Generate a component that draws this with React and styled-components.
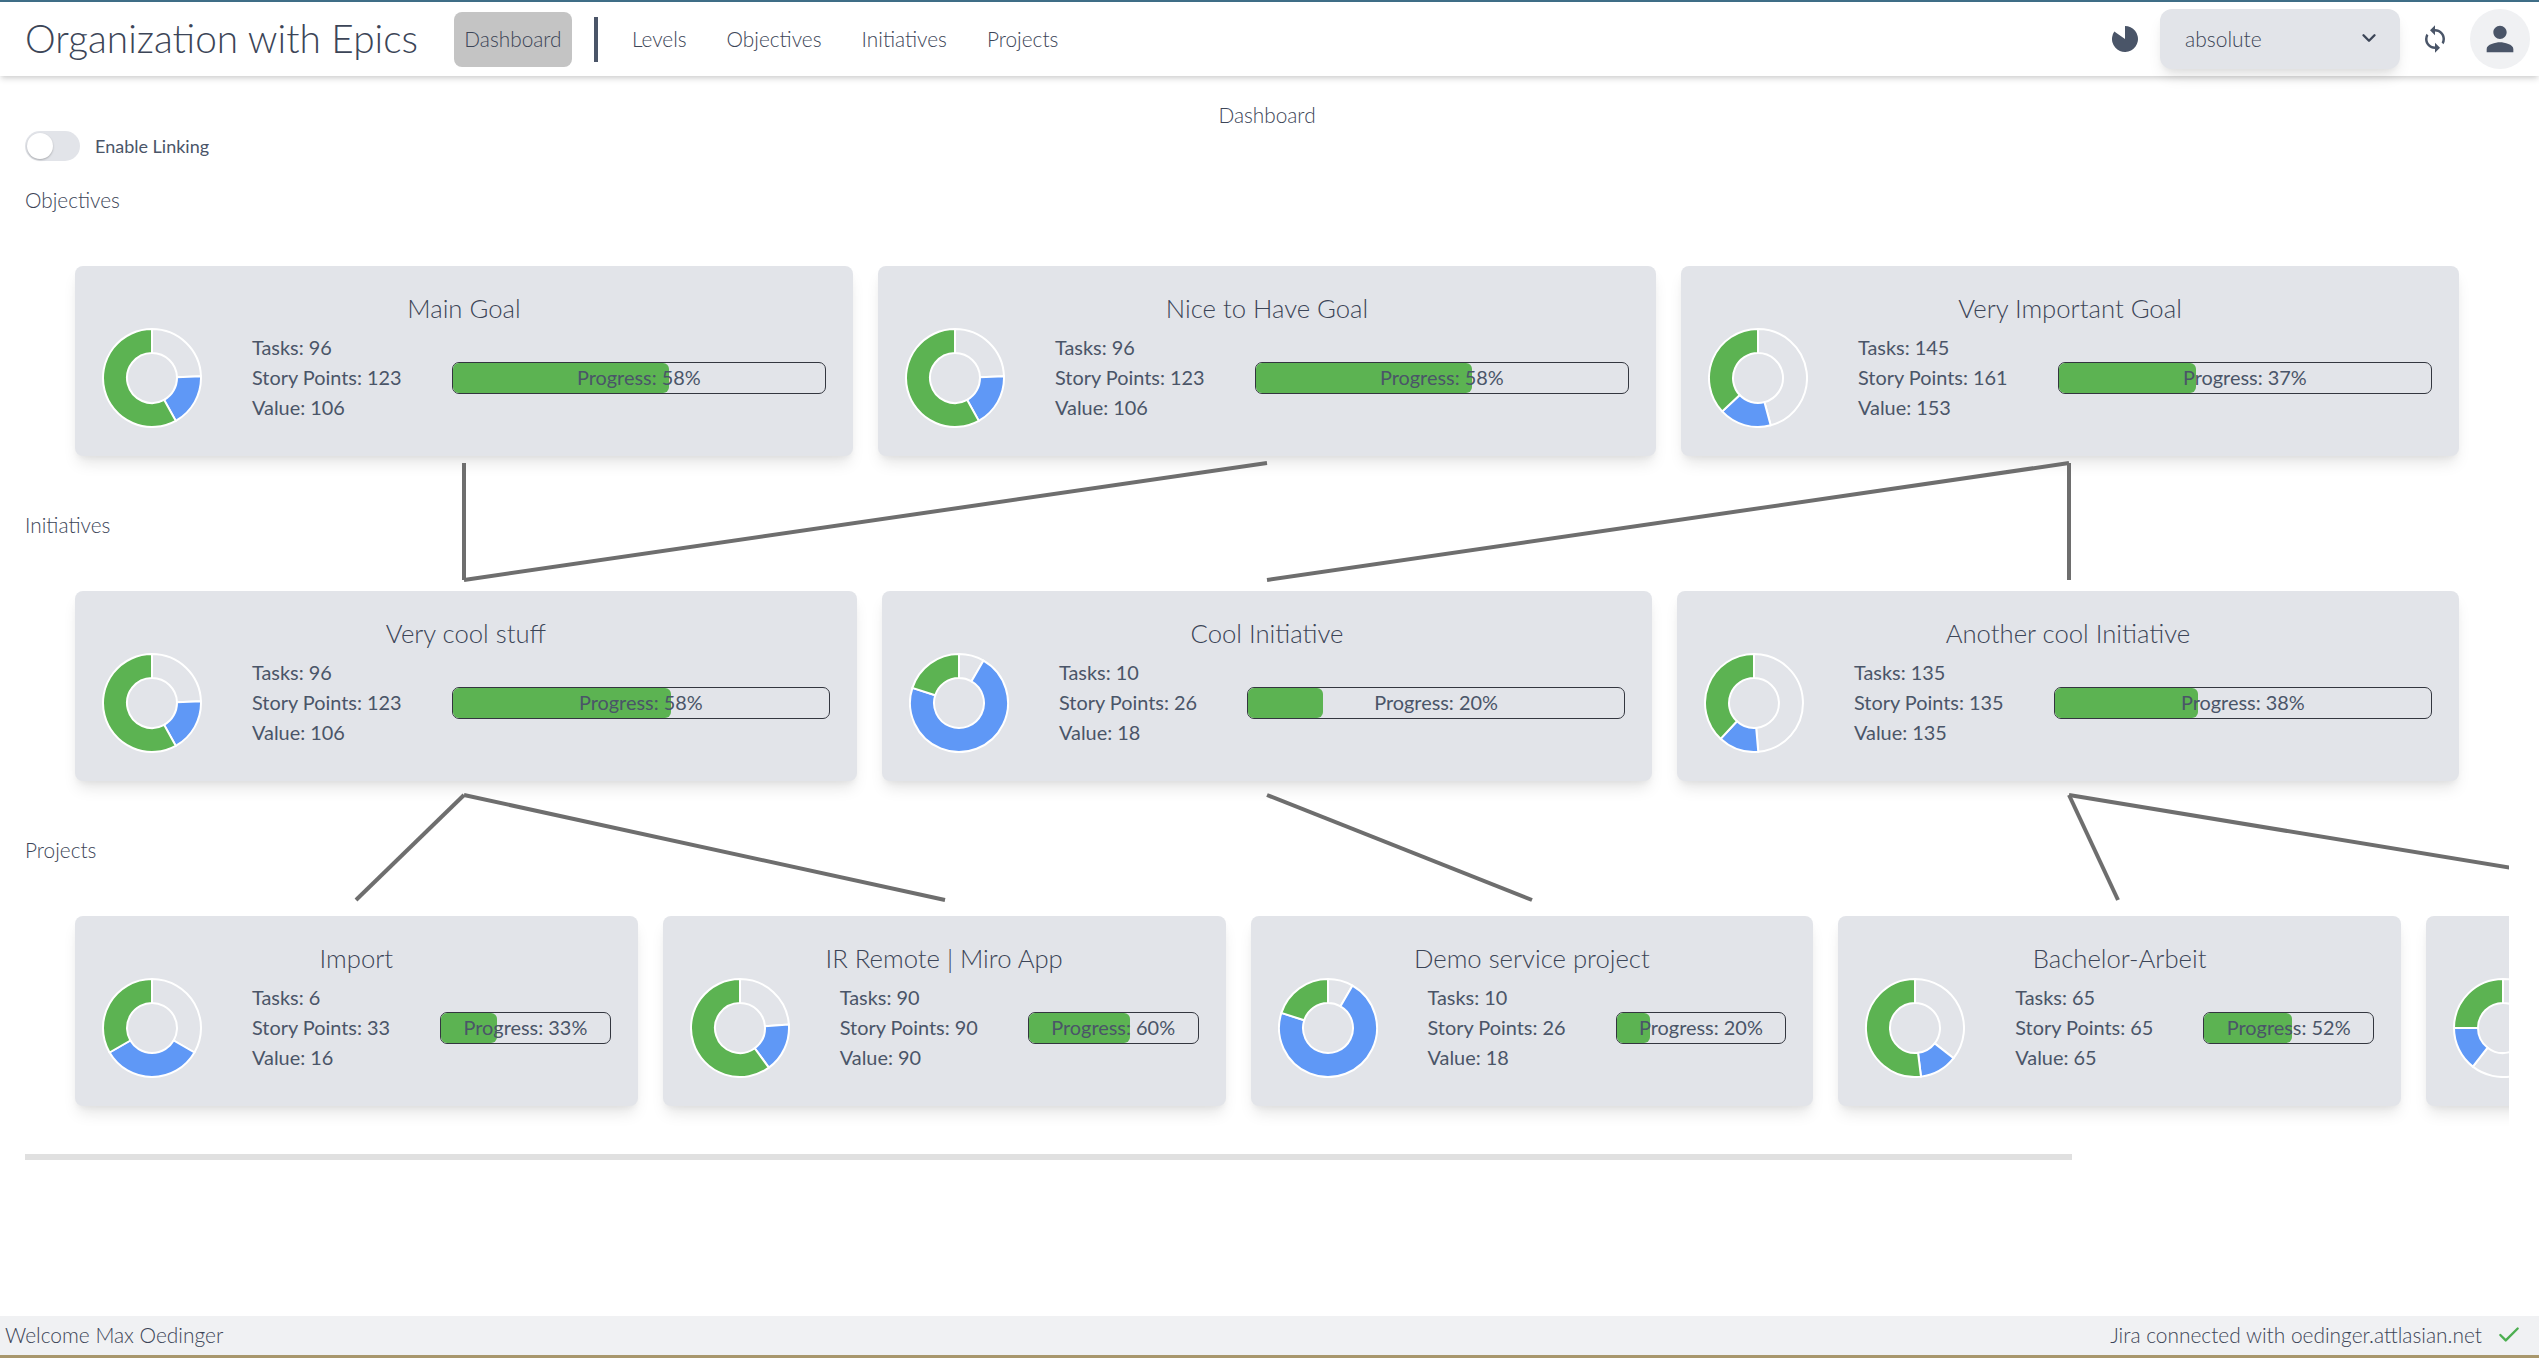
import React from 'react';
import styled, { createGlobalStyle } from 'styled-components';
import { MdSync, MdPerson } from 'react-icons/md';
import { FiChevronDown, FiCheck } from 'react-icons/fi';

const textColor = '#4a5568';
const lightTextColor = '#3c4557';
const cardColor = '#e2e4e9';

const GlobalStyle = createGlobalStyle`
  html, body {
    margin: 0;
    height: 100%;
    overflow: hidden;
    background: #fff;
    color: ${textColor};
    font-family: Lato, "Open Sans", sans-serif;
  }
`;

const Page = styled.div`
  display: flex;
  flex-direction: column;
  height: 100vh;
  border-top: 2px solid #3f6e87;
  border-bottom: 3px solid #a8976c;
  box-sizing: border-box;
`;

const NavBar = styled.header`
  display: flex;
  align-items: center;
  flex-shrink: 0;
  height: 74px;
  padding: 0 9px 0 25px;
  box-sizing: border-box;
  background: #fff;
  box-shadow: 0 4px 6px -1px rgba(0, 0, 0, 0.14), 0 2px 4px -1px rgba(0, 0, 0, 0.06);
  position: relative;
  z-index: 2;
`;

const Brand = styled.h1`
  margin: 0 36px 0 0;
  padding-bottom: 2px;
  color: ${lightTextColor};
  font-size: 38.8px;
  font-weight: 300;
`;

const ActiveLink = styled.div`
  display: flex;
  align-items: center;
  justify-content: center;
  width: 118px;
  height: 55px;
  padding-bottom: 2px;
  box-sizing: border-box;
  border-radius: 8px;
  background: #c4c4c4;
  color: ${lightTextColor};
  font-size: 20.8px;
  font-weight: 300;
`;

const NavDivider = styled.div`
  width: 4px;
  height: 45px;
  margin: 0 34px 0 22px;
  background: ${textColor};
`;

const NavLink = styled.span`
  margin-right: 40px;
  padding-bottom: 2px;
  color: ${lightTextColor};
  font-size: 20.8px;
  font-weight: 300;
`;

const NavRight = styled.div`
  display: flex;
  align-items: center;
  margin-left: auto;
`;

const ModeSelect = styled.div`
  display: flex;
  align-items: center;
  justify-content: space-between;
  width: 240px;
  height: 60px;
  margin: 0 20px 0 22px;
  padding: 0 20px 2px 25px;
  box-sizing: border-box;
  border-radius: 12px;
  background: ${cardColor};
  box-shadow: 0 10px 15px -3px rgba(0, 0, 0, 0.1), 0 4px 6px -2px rgba(0, 0, 0, 0.05);
  color: ${lightTextColor};
  font-size: 21px;
  font-weight: 300;
`;

const Avatar = styled.div`
  display: flex;
  align-items: center;
  justify-content: center;
  width: 60px;
  height: 60px;
  margin-left: 20px;
  border-radius: 50%;
  background: #f0f1f3;
`;

const Main = styled.main`
  flex: 1;
  min-height: 0;
  padding: 0 30px 0 25px;
`;

const PageTitle = styled.div`
  margin-top: 27px;
  height: 24px;
  line-height: 23px;
  text-align: center;
  color: ${lightTextColor};
  font-size: 20.8px;
  font-weight: 300;
`;

const ToggleRow = styled.div`
  display: flex;
  align-items: center;
  gap: 15px;
  height: 30px;
  margin-top: 4px;
  font-size: 18px;
  font-weight: 400;
`;

const ToggleTrack = styled.div`
  display: flex;
  align-items: center;
  width: 55px;
  height: 30px;
  padding: 0 2px;
  box-sizing: border-box;
  border-radius: 15px;
  background: ${cardColor};
`;

const ToggleKnob = styled.div`
  width: 26px;
  height: 26px;
  border-radius: 50%;
  background: #fff;
  box-shadow: 0 1px 2px rgba(0, 0, 0, 0.25);
`;

const Canvas = styled.div`
  position: relative;
  margin-top: 25px;
  overflow: hidden;
`;

const ConnectorLayer = styled.svg`
  position: absolute;
  top: 0;
  left: 0;
  z-index: 1;
  pointer-events: none;
`;

const LevelLabel = styled.div`
  height: 28px;
  line-height: 27px;
  margin-top: ${(props) => (props.$first ? 0 : 55)}px;
  margin-bottom: 52px;
  color: ${lightTextColor};
  font-size: 20.8px;
  font-weight: 300;
`;

const CardRow = styled.div`
  display: grid;
  grid-template-columns: ${(props) => props.$columns};
  gap: 25px;
  padding: 0 50px;
  width: max-content;
`;

const Card = styled.article`
  height: 190px;
  padding: 25px 27px 0;
  box-sizing: border-box;
  border-radius: 8px;
  background: ${cardColor};
  box-shadow: 0 10px 15px -3px rgba(0, 0, 0, 0.1), 0 4px 6px -2px rgba(0, 0, 0, 0.05);
`;

const CardTitle = styled.h3`
  margin: 0;
  height: 36px;
  line-height: 35px;
  text-align: center;
  color: ${lightTextColor};
  font-size: 25.7px;
  font-weight: 300;
`;

const CardBody = styled.div`
  display: flex;
  align-items: center;
  gap: 50px;
  margin-top: 1px;
  white-space: nowrap;
`;

const Stats = styled.div`
  position: relative;
  top: -1px;
  font-size: 19.9px;
  font-weight: 400;
  line-height: 30px;
`;

const ProgressBar = styled.div`
  position: relative;
  flex: 1;
  height: 32px;
  box-sizing: border-box;
  border: 1.5px solid #33363f;
  border-radius: 7px;
  text-align: center;
  line-height: 28px;
  font-size: 19.9px;
`;

const ProgressFill = styled.div`
  position: absolute;
  top: 0;
  bottom: 0;
  left: 0;
  border-radius: 6px;
  background: #5cb352;
`;

const ProgressText = styled.span`
  position: relative;
`;

const ScrollThumb = styled.div`
  width: 2047px;
  height: 6px;
  margin-top: 48px;
  background: #e0e0e0;
`;

const Footer = styled.footer`
  display: flex;
  align-items: center;
  justify-content: space-between;
  flex-shrink: 0;
  height: 39px;
  padding: 0 17px 2px 5px;
  box-sizing: border-box;
  background: #f0f1f3;
  color: ${lightTextColor};
  font-size: 20.9px;
  font-weight: 300;
`;

const FooterStatus = styled.div`
  display: flex;
  align-items: center;
  gap: 14px;
`;

const polar = (deg, r) => {
  const rad = ((deg - 90) * Math.PI) / 180;
  return `${(50 + r * Math.cos(rad)).toFixed(2)} ${(50 + r * Math.sin(rad)).toFixed(2)}`;
};

const wedge = (from, to) => {
  const large = to - from > 180 ? 1 : 0;
  return `M${polar(from, 49)} A49 49 0 ${large} 1 ${polar(to, 49)} L${polar(to, 25)} A25 25 0 ${large} 0 ${polar(from, 25)} Z`;
};

// angles run clockwise from 12 o'clock: todo 0..blue, in progress blue..green, done green..360
const Donut = ({ blue, green }) => (
  <svg width="100" height="100" viewBox="0 0 100 100" style={{ flexShrink: 0 }}>
    <g stroke="#fff" strokeWidth="2">
      <path d={wedge(0, blue)} fill="none" />
      <path d={wedge(blue, green)} fill="#5f98f6" />
      <path d={wedge(green, 360)} fill="#5cb352" />
    </g>
  </svg>
);

const StatusCard = ({ item }) => (
  <Card>
    <CardTitle>{item.title}</CardTitle>
    <CardBody>
      <Donut blue={item.blue} green={item.green} />
      <Stats>
        <div>Tasks: {item.tasks}</div>
        <div>Story Points: {item.points}</div>
        <div>Value: {item.value}</div>
      </Stats>
      <ProgressBar>
        <ProgressFill style={{ width: `${item.progress}%` }} />
        <ProgressText>Progress: {item.progress}%</ProgressText>
      </ProgressBar>
    </CardBody>
  </Card>
);

const objectives = [
  { title: 'Main Goal', tasks: 96, points: 123, value: 106, progress: 58, blue: 88, green: 151 },
  { title: 'Nice to Have Goal', tasks: 96, points: 123, value: 106, progress: 58, blue: 88, green: 151 },
  { title: 'Very Important Goal', tasks: 145, points: 161, value: 153, progress: 37, blue: 165, green: 227 },
];

const initiatives = [
  { title: 'Very cool stuff', tasks: 96, points: 123, value: 106, progress: 58, blue: 88, green: 151 },
  { title: 'Cool Initiative', tasks: 10, points: 26, value: 18, progress: 20, blue: 30, green: 288 },
  { title: 'Another cool Initiative', tasks: 135, points: 135, value: 135, progress: 38, blue: 175, green: 223 },
];

const projects = [
  { title: 'Import', tasks: 6, points: 33, value: 16, progress: 33, blue: 120, green: 240 },
  { title: 'IR Remote | Miro App', tasks: 90, points: 90, value: 90, progress: 60, blue: 86, green: 144 },
  { title: 'Demo service project', tasks: 10, points: 26, value: 18, progress: 20, blue: 30, green: 288 },
  { title: 'Bachelor-Arbeit', tasks: 65, points: 65, value: 65, progress: 52, blue: 128, green: 173 },
  { title: 'Project', tasks: 70, points: 70, value: 70, progress: 25, blue: 218, green: 270 },
];

// page coordinates, the layer's viewBox starts where the canvas starts
const links = [
  [464, 463, 464, 580], [1267, 463, 464, 580], [2069, 463, 1267, 580], [2069, 463, 2069, 580],
  [464, 795, 356, 900], [464, 795, 945, 900], [1267, 795, 1532, 900],
  [2069, 795, 2118, 900], [2069, 795, 2706, 900],
];

const App = () => (
  <Page>
    <GlobalStyle />
    <NavBar>
      <Brand>Organization with Epics</Brand>
      <ActiveLink>Dashboard</ActiveLink>
      <NavDivider />
      <NavLink>Levels</NavLink>
      <NavLink>Objectives</NavLink>
      <NavLink>Initiatives</NavLink>
      <NavLink>Projects</NavLink>
      <NavRight>
        <svg width="26" height="26" viewBox="0 0 26 26">
          <path d="M13 13L13 0A13 13 0 1 1 2.3 5.6Z" fill={textColor} />
        </svg>
        <ModeSelect>
          absolute
          <FiChevronDown size={22} strokeWidth={2.6} />
        </ModeSelect>
        <MdSync size={30} color={textColor} />
        <Avatar>
          <MdPerson size={40} color={textColor} />
        </Avatar>
      </NavRight>
    </NavBar>
    <Main>
      <PageTitle>Dashboard</PageTitle>
      <ToggleRow>
        <ToggleTrack>
          <ToggleKnob />
        </ToggleTrack>
        Enable Linking
      </ToggleRow>
      <Canvas>
        <ConnectorLayer width="2484" height="1000" viewBox="25 186 2484 1000">
          {links.map(([x1, y1, x2, y2]) => (
            <line key={`${x1}-${y1}-${x2}`} x1={x1} y1={y1} x2={x2} y2={y2} stroke="#6e6e6e" strokeWidth="4" />
          ))}
        </ConnectorLayer>
        <LevelLabel $first>Objectives</LevelLabel>
        <CardRow $columns="repeat(3, 778px)">
          {objectives.map((item) => <StatusCard key={item.title} item={item} />)}
        </CardRow>
        <LevelLabel>Initiatives</LevelLabel>
        <CardRow $columns="782px 770px 782px">
          {initiatives.map((item) => <StatusCard key={item.title} item={item} />)}
        </CardRow>
        <LevelLabel>Projects</LevelLabel>
        <CardRow $columns="repeat(5, 562.75px)">
          {projects.map((item) => <StatusCard key={item.title} item={item} />)}
        </CardRow>
        <ScrollThumb />
      </Canvas>
    </Main>
    <Footer>
      <span>Welcome Max Oedinger</span>
      <FooterStatus>
        Jira connected with oedinger.attlasian.net
        <FiCheck size={26} color="#4caf50" strokeWidth={2.2} />
      </FooterStatus>
    </Footer>
  </Page>
);

export default App;
